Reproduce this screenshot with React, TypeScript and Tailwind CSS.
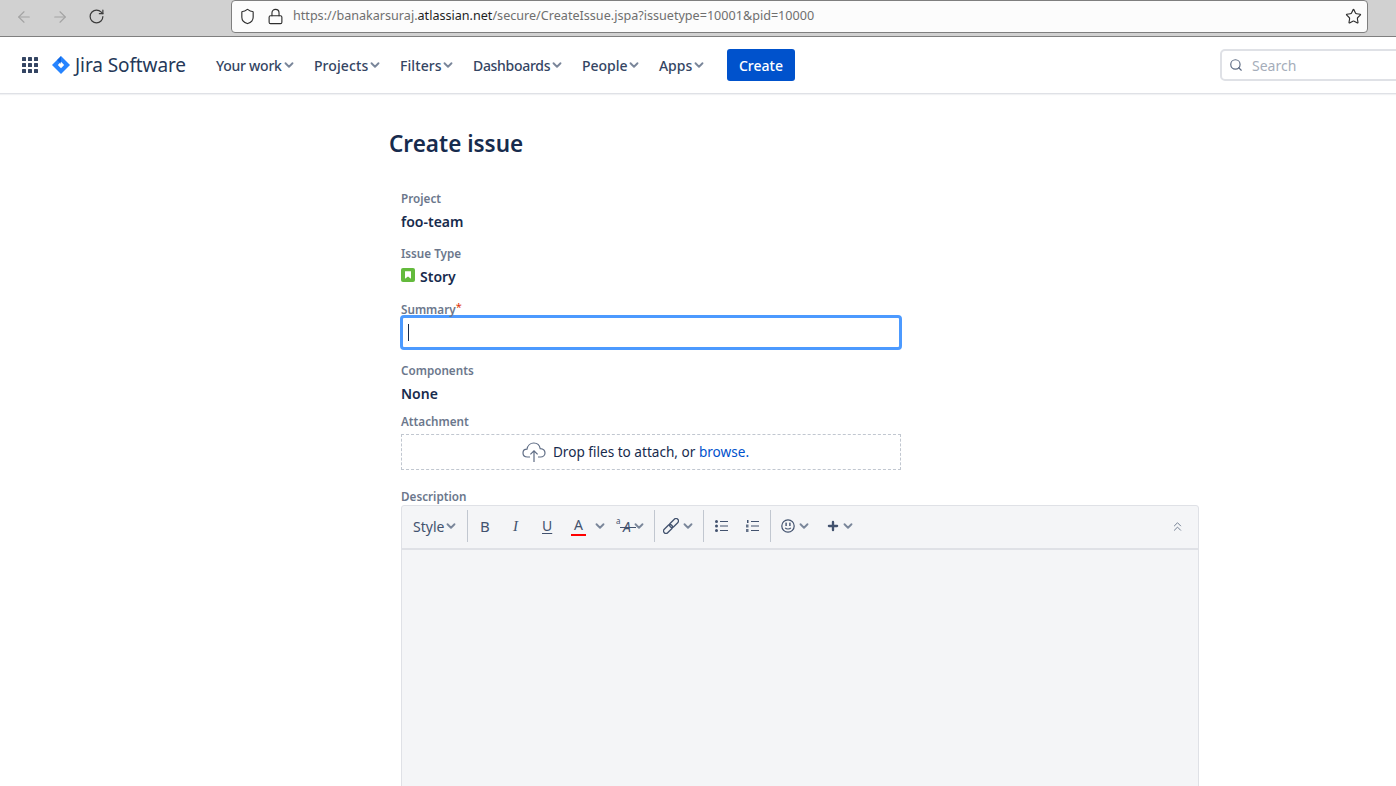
import { ArrowLeft, ArrowRight, RotateCw, Shield, Lock, Star, Search, ChevronDown, ChevronsUp, Plus } from "lucide-react";

const navItems = [
  { label: "Your work", width: "w-[66px] tracking-[-0.25px]" },
  { label: "Projects", width: "w-[54px] tracking-[0.1px]" },
  { label: "Filters", width: "w-[41px] tracking-[0.1px]" },
  { label: "Dashboards", width: "w-[77px] tracking-[-0.3px]" },
  { label: "People", width: "w-[45px]" },
  { label: "Apps", width: "w-[33px]" },
];

function Caret({ className = "" }: { className?: string }) {
  return (
    <span className={`inline-flex w-[13px] justify-center ${className}`}>
      <ChevronDown size={14} strokeWidth={3.2} className="shrink-0 text-[#7a869a]" />
    </span>
  );
}

function Divider() {
  return <div className="w-px h-8 bg-[#c1c7d0]" />;
}

function BrowserBar() {
  return (
    <div className="flex h-[37px] bg-[#d1d1d1] border-b border-[#7f7f7f] pl-[15px] pr-[28px]">
      <div className="flex items-start pt-[8px] w-[216px] shrink-0">
        <ArrowLeft size={18} strokeWidth={1.5} className="text-[#a3a3a3]" />
        <ArrowRight size={18} strokeWidth={1.5} className="text-[#a3a3a3] ml-[18px]" />
        <RotateCw size={17} strokeWidth={1.7} className="text-[#3b3b3b] ml-[19px]" />
      </div>
      <div className="flex items-center flex-1 h-[33px] bg-[#fcfcfc] border border-[#7f7f7f] rounded-[4px] pl-[7px] pr-[5px]">
        <Shield size={17} strokeWidth={1.6} className="text-[#2e2e2e]" />
        <Lock size={17} strokeWidth={1.6} className="text-[#2e2e2e] ml-[11px]" />
        <div className="ml-[9px] flex-1 text-[12.6px] text-[#6f6f6f] font-['Noto_Sans',sans-serif]">
          https://banakarsuraj.<span className="text-[#1e1e1e]">atlassian.net</span>/secure/CreateIssue.jspa?issuetype=10001&amp;pid=10000
        </div>
        <Star size={17} strokeWidth={1.6} className="text-[#2e2e2e]" />
      </div>
    </div>
  );
}

function AppGrid() {
  return (
    <svg width="16" height="16" viewBox="0 0 16 16" className="text-[#344563]" fill="currentColor">
      {[0, 6, 12].map((y) =>
        [0, 6, 12].map((x) => <rect key={`${x}-${y}`} x={x} y={y} width="4" height="4" rx="0.6" />)
      )}
    </svg>
  );
}

function JiraMark() {
  return (
    <svg width="18" height="18" viewBox="0 0 18 18">
      <path d="M9 0 L18 9 L9 18 L0 9 Z" fill="#2684ff" />
      <path d="M9 5.8 L12.2 9 L9 12.2 L5.8 9 Z" fill="#fff" />
      <path d="M9 0 L5 4 L9 8 Z" fill="#0052cc" opacity="0.55" />
    </svg>
  );
}

function TopNav() {
  return (
    <div className="flex items-center h-[57px] bg-white border-b border-[#dfe1e6] pl-[22px] shadow-[0_1px_1px_rgba(9,30,66,0.06)]">
      <AppGrid />
      <div className="ml-[14px]">
        <JiraMark />
      </div>
      <span className="ml-[5px] text-[19px] text-[#253858] tracking-[-0.1px]">Jira Software</span>
      <nav className="flex items-center ml-[30px] gap-[18px]">
        {navItems.map((item) => (
          <div key={item.label} className="flex items-center gap-[1px] text-[14px] font-medium text-[#344563]">
            <span className={`${item.width} whitespace-nowrap`}>{item.label}</span>
            <Caret />
          </div>
        ))}
      </nav>
      <button className="ml-[21px] h-[32px] w-[68px] rounded-[3px] bg-[#0052cc] text-white text-[14px] font-medium">
        Create
      </button>
      <div className="ml-auto w-[190px] -mr-[14px] h-[32px] flex items-center border-2 border-[#dfe1e6] rounded-[5px] pl-[7px]">
        <Search size={14} strokeWidth={2} className="text-[#5e6c84]" />
        <span className="ml-[9px] text-[14px] text-[#a5adba]">Search</span>
      </div>
    </div>
  );
}

function Label({ children }: { children: React.ReactNode }) {
  return <div className="text-[11.7px] leading-[16px] font-semibold text-[#6b778c]">{children}</div>;
}

function Value({ children }: { children: React.ReactNode }) {
  return <div className="text-[14px] leading-[20px] font-semibold text-[#172b4d]">{children}</div>;
}

function StoryIcon() {
  return (
    <svg width="14" height="14" viewBox="0 0 14 14">
      <rect width="14" height="14" rx="2" fill="#63ba3c" />
      <path d="M4 3.2 H10 V10.8 L7 8.6 L4 10.8 Z" fill="#fff" />
    </svg>
  );
}

function CloudIcon() {
  return (
    <svg width="24" height="22" viewBox="0 0 24 22" fill="none" stroke="#5e6c84" strokeWidth="1.2">
      <path d="M8 16 H5.5 C2.8 16 1 14.2 1 12 C1 9.8 2.7 8.2 5 8.2 C5.5 4.8 8.2 2 11.8 2 C15.2 2 17.6 4.4 18.2 7.6 C21 7.8 23 9.6 23 12 C23 14.3 21 16 18.6 16 H16" />
      <path d="M12 21 V10 M8.4 13.4 L12 9.8 L15.6 13.4" />
    </svg>
  );
}

function ColorA() {
  return (
    <div className="flex flex-col items-center w-[15px]">
      <span className="text-[14px] leading-[17px] text-[#42526e]">A</span>
      <div className="w-[15px] h-[2px] bg-[#ff0000] mt-[1px]" />
    </div>
  );
}

function StrikeA() {
  return (
    <div className="relative flex items-center w-[16px] text-[#42526e]">
      <span className="absolute -left-px top-[-2px] text-[8px] leading-[10px]">a</span>
      <span className="ml-[6px] text-[14px] leading-[17px] italic">A</span>
      <span className="absolute left-[3px] right-[-3px] top-[9px] h-px bg-[#42526e]" />
    </div>
  );
}

function LinkIcon() {
  return (
    <svg width="16" height="16" viewBox="0 0 16 16" fill="none" stroke="#42526e" strokeWidth="1.3">
      <g transform="rotate(-45 8 8)">
        <rect x="-1.5" y="5.6" width="10.5" height="4.8" rx="2.4" />
        <rect x="7" y="5.6" width="10.5" height="4.8" rx="2.4" />
      </g>
    </svg>
  );
}

function BulletList() {
  return (
    <svg width="13" height="12" viewBox="0 0 13 12" fill="#42526e">
      <circle cx="1.5" cy="1.5" r="1.5" />
      <circle cx="1.5" cy="6" r="1.5" />
      <circle cx="1.5" cy="10.5" r="1.5" />
      <rect x="5" y="1" width="8" height="1" />
      <rect x="5" y="5.5" width="8" height="1" />
      <rect x="5" y="10" width="8" height="1" />
    </svg>
  );
}

function NumberList() {
  return (
    <svg width="13" height="12" viewBox="0 0 13 12" fill="#42526e">
      <rect x="1" y="0" width="1.5" height="3" />
      <rect x="0" y="4.5" width="2.5" height="3" opacity="0.8" />
      <rect x="0" y="9" width="2.5" height="3" opacity="0.8" />
      <rect x="5" y="1" width="8" height="1" />
      <rect x="5" y="5.5" width="8" height="1" />
      <rect x="5" y="10" width="8" height="1" />
    </svg>
  );
}

function SmileIcon() {
  return (
    <svg width="14" height="14" viewBox="0 0 14 14" fill="none" stroke="#42526e" strokeWidth="1.2">
      <circle cx="7" cy="7" r="6.2" />
      <rect x="4.4" y="3.6" width="1.4" height="3.4" fill="#42526e" stroke="none" />
      <rect x="8.2" y="3.6" width="1.4" height="3.4" fill="#42526e" stroke="none" />
      <path d="M4.2 8.8 C5.4 10.4 8.6 10.4 9.8 8.8" />
    </svg>
  );
}

function Toolbar() {
  return (
    <div className="flex items-center h-[44px] border-b-2 border-[#dfe1e6] pb-[2px] pl-[11px] pr-[13px] text-[#42526e]">
      <div className="flex items-center w-[43px] text-[14px]">
        Style
        <Caret />
      </div>
      <div className="ml-[11px]"><Divider /></div>
      <span className="ml-[12px] w-[12px] text-[15px] leading-none">B</span>
      <span className="ml-[21px] w-[10px] text-[15px] leading-none italic font-['Liberation_Serif',serif]">I</span>
      <span className="ml-[19px] w-[13px] text-[14px] leading-none underline underline-offset-2">U</span>
      <div className="ml-[16px]"><ColorA /></div>
      <Caret className="ml-[7px]" />
      <div className="ml-[11px]"><StrikeA /></div>
      <Caret className="-ml-[1px]" />
      <div className="ml-[9px]"><Divider /></div>
      <div className="ml-[8px]"><LinkIcon /></div>
      <Caret className="ml-[2px]" />
      <div className="ml-[9px]"><Divider /></div>
      <div className="ml-[11px]"><BulletList /></div>
      <div className="ml-[18px]"><NumberList /></div>
      <div className="ml-[11px]"><Divider /></div>
      <div className="ml-[10px]"><SmileIcon /></div>
      <Caret className="ml-[2px]" />
      <Plus size={14} strokeWidth={4} className="ml-[16px] text-[#42526e]" />
      <Caret className="ml-[1px]" />
      <ChevronsUp size={15} strokeWidth={1.5} className="ml-auto text-[#6b778c]" />
    </div>
  );
}

export default function App() {
  return (
    <div className="h-[786px] w-[1396px] overflow-hidden bg-white font-['Noto_Sans',sans-serif]">
      <BrowserBar />
      <TopNav />
      <main className="pl-[389px]">
        <h1 className="pt-[33px] text-[22.5px] leading-[34px] font-semibold text-[#172b4d]">Create issue</h1>
        <div className="ml-[12px] mt-[29px]">
          <Label>Project</Label>
          <div className="mt-[6px]"><Value>foo-team</Value></div>

          <div className="mt-[13px]"><Label>Issue Type</Label></div>
          <div className="mt-[6px] flex items-start gap-[5px]">
            <div className="pt-[1px]"><StoryIcon /></div>
            <Value>Story</Value>
          </div>

          <div className="mt-[14px] flex">
            <Label>Summary</Label>
            <span className="text-[11px] leading-[11px] text-[#de350b]">*</span>
          </div>
          <div className="-mt-[2px] -ml-[1px] w-[502px] h-[35px] border-[3px] border-[#4c9aff] rounded-[4px] flex items-center pl-[5px]">
            <div className="w-px h-[17px] bg-[#172b4d]" />
          </div>

          <div className="mt-[12px]"><Label>Components</Label></div>
          <div className="mt-[6px]"><Value>None</Value></div>

          <div className="mt-[9px]"><Label>Attachment</Label></div>
          <div className="mt-[5px] w-[500px] h-[36px] border border-dashed border-[#c1c7d0] flex items-center justify-center gap-[7px] pr-[31px] text-[13.6px] text-[#172b4d]">
            <CloudIcon />
            <span>
              Drop files to attach, or <span className="text-[#0052cc]">browse.</span>
            </span>
          </div>

          <div className="mt-[18px]"><Label>Description</Label></div>
          <div className="mt-[1px] w-[798px] h-[400px] border border-[#dfe1e6] rounded-t-[3px] bg-[#f4f5f7]">
            <Toolbar />
          </div>
        </div>
      </main>
    </div>
  );
}
